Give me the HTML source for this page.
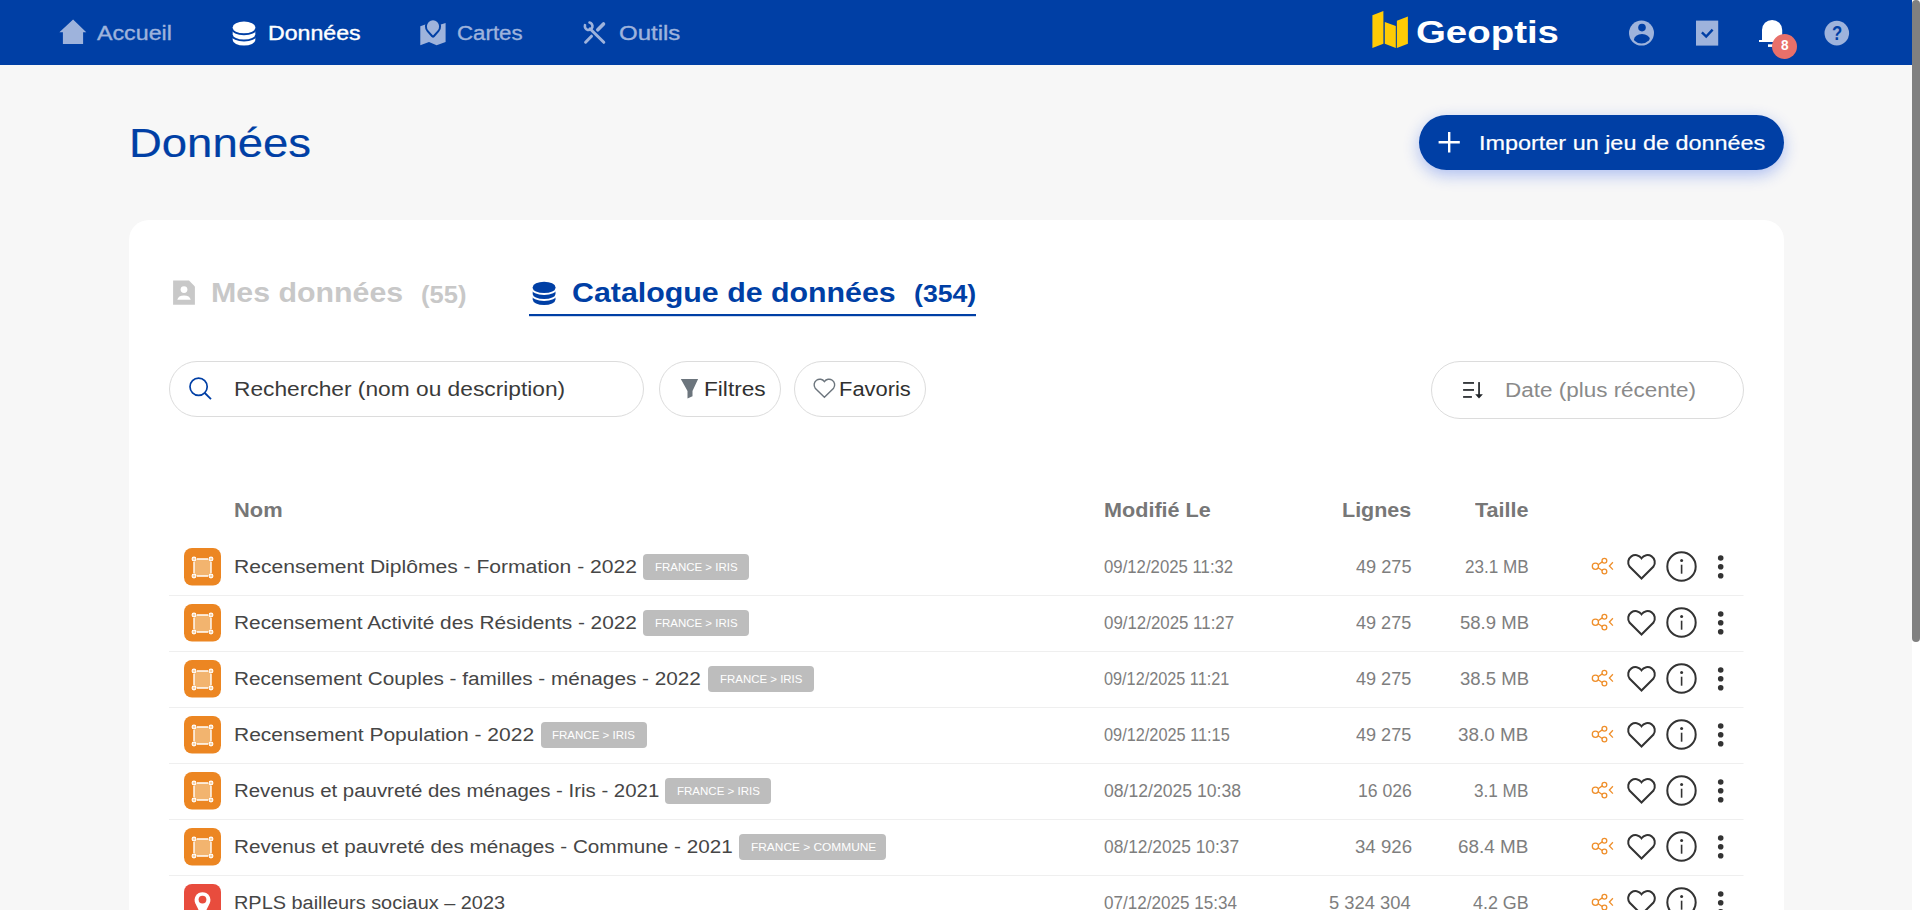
<!DOCTYPE html>
<html><head><meta charset="utf-8"><title>Données - Geoptis</title>
<style>
html,body{margin:0;padding:0;width:1920px;height:910px;overflow:hidden;background:#f7f7f7;font-family:"Liberation Sans", sans-serif}
.t{position:absolute;white-space:nowrap;transform-origin:0 0}
</style></head><body>
<div style="position:absolute;left:0;top:0;width:1912px;height:65px;background:#003fa5"></div>
<div style="position:absolute;left:1912px;top:0;width:8px;height:910px;background:#fff"></div>
<div style="position:absolute;left:1912px;top:0;width:8px;height:642px;background:#808080;border-radius:4px"></div>
<svg style="position:absolute;left:0;top:0" width="1912" height="65" viewBox="0 0 1912 65">
<polygon fill="#9eb3dc" points="59.4,32.3 73.1,19.4 86.3,32.3 83.1,32.3 83.1,44 62.9,44 62.9,32.3"/>
<g>
<path fill="#fff" d="M232.7 27.2 A11.3 5.6 0 0 1 255.3 27.2 L255.3 40 A11.3 5.6 0 0 1 232.7 40 Z"/>
<path fill="none" stroke="#003fa5" stroke-width="1.9" d="M232 28.6 A12 5.6 0 0 0 256 28.6"/>
<path fill="none" stroke="#003fa5" stroke-width="1.9" d="M232 34.9 A12 5.6 0 0 0 256 34.9"/>
</g>
<path fill="#9eb3dc" d="M420.3 26.3 L426 24.2 L440 24.8 L445.6 23.1 L445.6 42 L436.6 45.3 L429 42 L420.3 45.2 Z"/>
<path fill="#003fa5" stroke="#003fa5" stroke-width="4" stroke-linejoin="round" d="M433 35.6 L428.43 30.44 A6.1 6.1 0 1 1 437.57 30.44 Z"/><path fill="#9eb3dc" d="M433 35.6 L428.43 30.44 A6.1 6.1 0 1 1 437.57 30.44 Z"/>
<g stroke="#9eb3dc" stroke-linecap="round" fill="none">
<path stroke-width="3" d="M590 28.8 L603.8 42.3"/>
<path stroke-width="2.6" d="M585 25.2 A3.8 3.8 0 1 0 589.5 22.5"/>
<path stroke-width="3" d="M591.5 36.2 L585.6 42.2"/>
<path stroke-width="3.6" d="M597.8 29.8 L603.5 24"/>
</g>
<polygon fill="#ffcb05" points="1372.4,15.2 1383.4,11.0 1383.4,43.7 1372.4,47.9"/>
<polygon fill="#ffcb05" points="1384.8,22.0 1395.8,25.9 1395.8,47.9 1384.8,43.7"/>
<polygon fill="#ffcb05" points="1396.9,20.7 1407.9,16.5 1407.9,43.7 1396.9,47.9"/>
<circle cx="1641.5" cy="33.1" r="12.5" fill="#9eb3dc"/>
<circle cx="1642" cy="27.6" r="3.8" fill="#003fa5"/>
<clipPath id="uc"><circle cx="1641.5" cy="33.1" r="10.3"/></clipPath>
<ellipse cx="1642" cy="39.6" rx="8" ry="5.6" fill="#003fa5" clip-path="url(#uc)"/>
<rect x="1696" y="20.6" width="22.2" height="25" fill="#9eb3dc"/>
<path fill="none" stroke="#003fa5" stroke-width="2.4" d="M1701.9 32.4 L1706.2 36.6 L1712.6 29.6"/>
<path fill="#fff" d="M1762 40 L1762 30 A10.1 10.1 0 0 1 1782.2 30 L1782.2 40 L1784 40 L1784 42 L1759 42 L1759 40 Z"/>
<rect x="1768" y="44.3" width="5" height="2.6" fill="#fff"/>
<circle cx="1784.5" cy="46.5" r="12.5" fill="#e8706a"/>
<circle cx="1836.8" cy="33.1" r="12.3" fill="#9eb3dc"/>
</svg>
<div class="t" style="left:97.00px;top:22.92px;font-size:20px;line-height:20px;font-weight:400;color:#9eb3dc;transform:scaleX(1.1619);-webkit-text-stroke:0.35px #9eb3dc;">Accueil</div>
<div class="t" style="left:268.49px;top:22.87px;font-size:20px;line-height:20px;font-weight:400;color:#fff;transform:scaleX(1.1571);-webkit-text-stroke:0.35px #fff;">Données</div>
<div class="t" style="left:457.29px;top:23.07px;font-size:20px;line-height:20px;font-weight:400;color:#9eb3dc;transform:scaleX(1.1140);-webkit-text-stroke:0.35px #9eb3dc;">Cartes</div>
<div class="t" style="left:619.40px;top:23.07px;font-size:20px;line-height:20px;font-weight:400;color:#9eb3dc;transform:scaleX(1.2000);-webkit-text-stroke:0.35px #9eb3dc;">Outils</div>
<div class="t" style="left:1415.90px;top:16.21px;font-size:32px;line-height:32px;font-weight:700;color:#fff;transform:scaleX(1.2000);">Geoptis</div>
<div class="t" style="left:1780.80px;top:38.45px;font-size:14px;line-height:14px;font-weight:700;color:#fff;transform:scaleX(0.9750);">8</div>
<div class="t" style="left:1832.07px;top:23.17px;font-size:20px;line-height:20px;font-weight:700;color:#003fa5;transform:scaleX(0.8350);">?</div>
<div class="t" style="left:129.29px;top:123.14px;font-size:40px;line-height:40px;font-weight:400;color:#003fa5;transform:scaleX(1.1365);-webkit-text-stroke:0.2px #003fa5;">Données</div>
<div style="position:absolute;left:1419px;top:115px;width:365px;height:55px;border-radius:28px;background:#003fa5;box-shadow:0 5px 16px rgba(20,70,230,0.32)"></div>
<svg style="position:absolute;left:0;top:0" width="1912" height="200"><path stroke="#fff" stroke-width="2.4" d="M1449.2 132 L1449.2 152.5 M1438.6 142.2 L1459.8 142.2"/></svg>
<div class="t" style="left:1479.26px;top:132.97px;font-size:20px;line-height:20px;font-weight:400;color:#fff;transform:scaleX(1.1702);-webkit-text-stroke:0.2px #fff;">Importer un jeu de données</div>
<div style="position:absolute;left:129px;top:220px;width:1655px;height:760px;background:#fff;border-radius:20px"></div>
<svg style="position:absolute;left:0;top:0" width="1912" height="910">
<path fill="#c8c8c8" d="M173.1 280.5 L189 280.5 L194.9 286.4 L194.9 304.7 L173.1 304.7 Z"/>
<circle cx="184" cy="289.6" r="3.4" fill="#fff"/>
<path fill="#fff" d="M177.3 299.8 A6.8 5.3 0 0 1 190.7 299.8 Z"/>
<g>
<path fill="#003fa5" d="M532.7 287.2 A11.4 5.5 0 0 1 555.5 287.2 L555.5 299.5 A11.4 5.5 0 0 1 532.7 299.5 Z"/>
<path fill="none" stroke="#fff" stroke-width="1.8" d="M532 288.4 A12.1 5.6 0 0 0 556.2 288.4"/>
<path fill="none" stroke="#fff" stroke-width="1.8" d="M532 294.4 A12.1 5.6 0 0 0 556.2 294.4"/>
</g>
<rect x="529" y="314" width="447" height="2.2" fill="#003fa5"/>
</svg>
<div class="t" style="left:210.53px;top:279.40px;font-size:28px;line-height:28px;font-weight:700;color:#c8c8c8;transform:scaleX(1.0833);">Mes données</div>
<div class="t" style="left:420.84px;top:282.78px;font-size:24px;line-height:24px;font-weight:700;color:#c8c8c8;transform:scaleX(1.0634);">(55)</div>
<div class="t" style="left:571.52px;top:278.90px;font-size:28px;line-height:28px;font-weight:700;color:#003fa5;transform:scaleX(1.0838);">Catalogue de données</div>
<div class="t" style="left:914.19px;top:282.28px;font-size:24px;line-height:24px;font-weight:700;color:#003fa5;transform:scaleX(1.1111);">(354)</div>
<div style="position:absolute;left:169px;top:361px;width:473px;height:54px;border:1px solid #dcdcdc;border-radius:28px"></div>
<div style="position:absolute;left:659px;top:361px;width:120px;height:54px;border:1px solid #dcdcdc;border-radius:28px"></div>
<div style="position:absolute;left:794px;top:361px;width:130px;height:54px;border:1px solid #dcdcdc;border-radius:28px"></div>
<div style="position:absolute;left:1431px;top:361px;width:311px;height:56px;border:1px solid #dcdcdc;border-radius:29px"></div>
<svg style="position:absolute;left:0;top:0" width="1912" height="910">
<circle cx="198.6" cy="386.8" r="8.6" fill="none" stroke="#003fa5" stroke-width="1.7"/>
<path d="M204.8 393 L211 399.2" stroke="#003fa5" stroke-width="1.8"/>
<path fill="#6c757d" d="M680.8 379.1 L698.1 379.1 L692.5 391.1 L692.5 396.2 L687.5 398.6 L687.5 391.1 Z"/>
<path fill="none" stroke="#6c757d" stroke-width="1.4" d="M824.4 397.3 L815.2 388.2 A4.9 4.9 0 0 1 824.4 381.6 A4.9 4.9 0 0 1 833.6 388.2 Z"/>
<g fill="#212529">
<rect x="1463.1" y="382.1" width="10.9" height="1.7"/>
<rect x="1463.1" y="389.1" width="10.9" height="1.7"/>
<rect x="1463.1" y="396.1" width="8.8" height="1.7"/>
<rect x="1478.2" y="382.1" width="1.7" height="13"/>
<path d="M1475.2 394.2 L1482.9 394.2 L1479 398.6 Z"/>
</g>
</svg>
<div class="t" style="left:233.98px;top:378.67px;font-size:20px;line-height:20px;font-weight:400;color:#3a3a3a;transform:scaleX(1.1370);">Rechercher (nom ou description)</div>
<div class="t" style="left:704.33px;top:378.87px;font-size:20px;line-height:20px;font-weight:400;color:#303030;transform:scaleX(1.1327);">Filtres</div>
<div class="t" style="left:838.81px;top:378.87px;font-size:20px;line-height:20px;font-weight:400;color:#303030;transform:scaleX(1.0952);">Favoris</div>
<div class="t" style="left:1504.75px;top:379.87px;font-size:20px;line-height:20px;font-weight:400;color:#8a8a8a;transform:scaleX(1.1234);">Date (plus récente)</div>
<div class="t" style="left:234.01px;top:499.87px;font-size:20px;line-height:20px;font-weight:700;color:#777;transform:scaleX(1.0930);">Nom</div>
<div class="t" style="left:1104.32px;top:499.97px;font-size:20px;line-height:20px;font-weight:700;color:#777;transform:scaleX(1.0804);">Modifié Le</div>
<div class="t" style="left:1341.93px;top:499.97px;font-size:20px;line-height:20px;font-weight:700;color:#777;transform:scaleX(1.0746);">Lignes</div>
<div class="t" style="left:1474.80px;top:499.97px;font-size:20px;line-height:20px;font-weight:700;color:#777;transform:scaleX(1.0796);">Taille</div>
<div class="t" style="left:233.93px;top:557.66px;font-size:18px;line-height:18px;font-weight:400;color:#464646;transform:scaleX(1.1708);">Recensement Diplômes - Formation - 2022</div>
<div style="position:absolute;left:643.1px;top:554px;width:105.6px;height:26px;background:#bdbdbd;border-radius:4px"></div>
<div class="t" style="left:654.86px;top:561.59px;font-size:11px;line-height:11px;font-weight:400;color:#fff;transform:scaleX(1.0429);">FRANCE &gt; IRIS</div>
<div class="t" style="left:1103.97px;top:557.66px;font-size:18px;line-height:18px;font-weight:400;color:#7e7e7e;transform:scaleX(0.9307);">09/12/2025 11:32</div>
<div class="t" style="left:1356.00px;top:557.66px;font-size:18px;line-height:18px;font-weight:400;color:#7e7e7e;transform:scaleX(1.0093);">49 275</div>
<div class="t" style="left:1464.75px;top:557.66px;font-size:18px;line-height:18px;font-weight:400;color:#7e7e7e;transform:scaleX(0.9508);">23.1 MB</div>
<div class="t" style="left:233.94px;top:613.66px;font-size:18px;line-height:18px;font-weight:400;color:#464646;transform:scaleX(1.1573);">Recensement Activité des Résidents - 2022</div>
<div style="position:absolute;left:643.1px;top:610px;width:105.6px;height:26px;background:#bdbdbd;border-radius:4px"></div>
<div class="t" style="left:654.86px;top:617.59px;font-size:11px;line-height:11px;font-weight:400;color:#fff;transform:scaleX(1.0429);">FRANCE &gt; IRIS</div>
<div class="t" style="left:1103.96px;top:613.66px;font-size:18px;line-height:18px;font-weight:400;color:#7e7e7e;transform:scaleX(0.9372);">09/12/2025 11:27</div>
<div class="t" style="left:1356.30px;top:613.66px;font-size:18px;line-height:18px;font-weight:400;color:#7e7e7e;transform:scaleX(1.0037);">49 275</div>
<div class="t" style="left:1459.57px;top:613.66px;font-size:18px;line-height:18px;font-weight:400;color:#7e7e7e;transform:scaleX(1.0292);">58.9 MB</div>
<div class="t" style="left:233.95px;top:669.66px;font-size:18px;line-height:18px;font-weight:400;color:#464646;transform:scaleX(1.1522);">Recensement Couples - familles - ménages - 2022</div>
<div style="position:absolute;left:708.4px;top:666px;width:105.5px;height:26px;background:#bdbdbd;border-radius:4px"></div>
<div class="t" style="left:720.16px;top:673.59px;font-size:11px;line-height:11px;font-weight:400;color:#fff;transform:scaleX(1.0410);">FRANCE &gt; IRIS</div>
<div class="t" style="left:1104.00px;top:669.66px;font-size:18px;line-height:18px;font-weight:400;color:#7e7e7e;transform:scaleX(0.9029);">09/12/2025 11:21</div>
<div class="t" style="left:1356.30px;top:669.66px;font-size:18px;line-height:18px;font-weight:400;color:#7e7e7e;transform:scaleX(1.0037);">49 275</div>
<div class="t" style="left:1459.57px;top:669.66px;font-size:18px;line-height:18px;font-weight:400;color:#7e7e7e;transform:scaleX(1.0292);">38.5 MB</div>
<div class="t" style="left:233.93px;top:725.66px;font-size:18px;line-height:18px;font-weight:400;color:#464646;transform:scaleX(1.1668);">Recensement Population - 2022</div>
<div style="position:absolute;left:540.7px;top:722px;width:106.0px;height:26px;background:#bdbdbd;border-radius:4px"></div>
<div class="t" style="left:552.45px;top:729.59px;font-size:11px;line-height:11px;font-weight:400;color:#fff;transform:scaleX(1.0474);">FRANCE &gt; IRIS</div>
<div class="t" style="left:1103.99px;top:725.66px;font-size:18px;line-height:18px;font-weight:400;color:#7e7e7e;transform:scaleX(0.9058);">09/12/2025 11:15</div>
<div class="t" style="left:1356.30px;top:725.66px;font-size:18px;line-height:18px;font-weight:400;color:#7e7e7e;transform:scaleX(1.0037);">49 275</div>
<div class="t" style="left:1458.35px;top:725.66px;font-size:18px;line-height:18px;font-weight:400;color:#7e7e7e;transform:scaleX(1.0477);">38.0 MB</div>
<div class="t" style="left:233.97px;top:781.66px;font-size:18px;line-height:18px;font-weight:400;color:#464646;transform:scaleX(1.1334);">Revenus et pauvreté des ménages - Iris - 2021</div>
<div style="position:absolute;left:664.8px;top:778px;width:106.0px;height:26px;background:#bdbdbd;border-radius:4px"></div>
<div class="t" style="left:676.55px;top:785.59px;font-size:11px;line-height:11px;font-weight:400;color:#fff;transform:scaleX(1.0474);">FRANCE &gt; IRIS</div>
<div class="t" style="left:1103.92px;top:781.66px;font-size:18px;line-height:18px;font-weight:400;color:#7e7e7e;transform:scaleX(0.9775);">08/12/2025 10:38</div>
<div class="t" style="left:1357.62px;top:781.66px;font-size:18px;line-height:18px;font-weight:400;color:#7e7e7e;transform:scaleX(0.9792);">16 026</div>
<div class="t" style="left:1474.15px;top:781.66px;font-size:18px;line-height:18px;font-weight:400;color:#7e7e7e;transform:scaleX(0.9527);">3.1 MB</div>
<div class="t" style="left:233.95px;top:837.66px;font-size:18px;line-height:18px;font-weight:400;color:#464646;transform:scaleX(1.1483);">Revenus et pauvreté des ménages - Commune - 2021</div>
<div style="position:absolute;left:738.8px;top:834px;width:147.6px;height:26px;background:#bdbdbd;border-radius:4px"></div>
<div class="t" style="left:750.52px;top:841.59px;font-size:11px;line-height:11px;font-weight:400;color:#fff;transform:scaleX(1.0816);">FRANCE &gt; COMMUNE</div>
<div class="t" style="left:1103.94px;top:837.66px;font-size:18px;line-height:18px;font-weight:400;color:#7e7e7e;transform:scaleX(0.9645);">08/12/2025 10:37</div>
<div class="t" style="left:1354.56px;top:837.66px;font-size:18px;line-height:18px;font-weight:400;color:#7e7e7e;transform:scaleX(1.0358);">34 926</div>
<div class="t" style="left:1458.35px;top:837.66px;font-size:18px;line-height:18px;font-weight:400;color:#7e7e7e;transform:scaleX(1.0477);">68.4 MB</div>
<div class="t" style="left:233.99px;top:893.66px;font-size:18px;line-height:18px;font-weight:400;color:#464646;transform:scaleX(1.1057);">RPLS bailleurs sociaux – 2023</div>
<div class="t" style="left:1103.95px;top:893.66px;font-size:18px;line-height:18px;font-weight:400;color:#7e7e7e;transform:scaleX(0.9489);">07/12/2025 15:34</div>
<div class="t" style="left:1328.98px;top:893.66px;font-size:18px;line-height:18px;font-weight:400;color:#7e7e7e;transform:scaleX(1.0190);">5 324 304</div>
<div class="t" style="left:1472.80px;top:893.66px;font-size:18px;line-height:18px;font-weight:400;color:#7e7e7e;transform:scaleX(0.9945);">4.2 GB</div>
<svg style="position:absolute;left:0;top:0" width="1912" height="910"><rect x="169" y="595" width="1574.5" height="1" fill="#efefef"/><rect x="184" y="548" width="37" height="37.5" rx="8" fill="#ec8622"/><rect x="194" y="559" width="17" height="17" fill="#f2b46f"/><path d="M197 559 L208 559 M211 562 L211 573 M208 576 L197 576 M194 573 L194 562" fill="none" stroke="#fff" stroke-width="1.4"/><circle cx="194" cy="559" r="1.9" fill="#f6d2aa" stroke="#fff" stroke-width="1.1"/><circle cx="211" cy="559" r="1.9" fill="#f6d2aa" stroke="#fff" stroke-width="1.1"/><circle cx="194" cy="576" r="1.9" fill="#f6d2aa" stroke="#fff" stroke-width="1.1"/><circle cx="211" cy="576" r="1.9" fill="#f6d2aa" stroke="#fff" stroke-width="1.1"/><g fill="none" stroke="#ef8f2b" stroke-width="1.3"><circle cx="1595.4" cy="566.25" r="3.1"/><circle cx="1604.4" cy="560.8" r="2.4"/><circle cx="1604.4" cy="571.5" r="2.4"/><path d="M1598.2 564.8 L1602.2 561.9 M1598.2 567.7 L1602.2 570.5"/><path d="M1612.9 562.3 L1609.4 566.0 L1612.9 569.6"/></g><path fill="none" stroke="#333" stroke-width="2" d="M1641.5 578.5 L1629.5 566.5 A6.6 6.6 0 0 1 1641.5 558.2 A6.6 6.6 0 0 1 1653.5 566.5 Z" stroke-linejoin="miter"/><circle cx="1681.5" cy="566.5" r="14.2" fill="none" stroke="#333" stroke-width="2"/><circle cx="1681.6" cy="560.4" r="1.5" fill="#333"/><rect x="1680.8" y="564.7" width="1.6" height="9" fill="#333"/><g fill="#333"><circle cx="1720.7" cy="558.0" r="2.8"/><circle cx="1720.7" cy="566.8" r="2.8"/><circle cx="1720.7" cy="575.7" r="2.8"/></g><rect x="169" y="651" width="1574.5" height="1" fill="#efefef"/><rect x="184" y="604" width="37" height="37.5" rx="8" fill="#ec8622"/><rect x="194" y="615" width="17" height="17" fill="#f2b46f"/><path d="M197 615 L208 615 M211 618 L211 629 M208 632 L197 632 M194 629 L194 618" fill="none" stroke="#fff" stroke-width="1.4"/><circle cx="194" cy="615" r="1.9" fill="#f6d2aa" stroke="#fff" stroke-width="1.1"/><circle cx="211" cy="615" r="1.9" fill="#f6d2aa" stroke="#fff" stroke-width="1.1"/><circle cx="194" cy="632" r="1.9" fill="#f6d2aa" stroke="#fff" stroke-width="1.1"/><circle cx="211" cy="632" r="1.9" fill="#f6d2aa" stroke="#fff" stroke-width="1.1"/><g fill="none" stroke="#ef8f2b" stroke-width="1.3"><circle cx="1595.4" cy="622.25" r="3.1"/><circle cx="1604.4" cy="616.8" r="2.4"/><circle cx="1604.4" cy="627.5" r="2.4"/><path d="M1598.2 620.8 L1602.2 617.9 M1598.2 623.7 L1602.2 626.5"/><path d="M1612.9 618.3 L1609.4 622.0 L1612.9 625.6"/></g><path fill="none" stroke="#333" stroke-width="2" d="M1641.5 634.5 L1629.5 622.5 A6.6 6.6 0 0 1 1641.5 614.2 A6.6 6.6 0 0 1 1653.5 622.5 Z" stroke-linejoin="miter"/><circle cx="1681.5" cy="622.5" r="14.2" fill="none" stroke="#333" stroke-width="2"/><circle cx="1681.6" cy="616.4" r="1.5" fill="#333"/><rect x="1680.8" y="620.7" width="1.6" height="9" fill="#333"/><g fill="#333"><circle cx="1720.7" cy="614.0" r="2.8"/><circle cx="1720.7" cy="622.8" r="2.8"/><circle cx="1720.7" cy="631.7" r="2.8"/></g><rect x="169" y="707" width="1574.5" height="1" fill="#efefef"/><rect x="184" y="660" width="37" height="37.5" rx="8" fill="#ec8622"/><rect x="194" y="671" width="17" height="17" fill="#f2b46f"/><path d="M197 671 L208 671 M211 674 L211 685 M208 688 L197 688 M194 685 L194 674" fill="none" stroke="#fff" stroke-width="1.4"/><circle cx="194" cy="671" r="1.9" fill="#f6d2aa" stroke="#fff" stroke-width="1.1"/><circle cx="211" cy="671" r="1.9" fill="#f6d2aa" stroke="#fff" stroke-width="1.1"/><circle cx="194" cy="688" r="1.9" fill="#f6d2aa" stroke="#fff" stroke-width="1.1"/><circle cx="211" cy="688" r="1.9" fill="#f6d2aa" stroke="#fff" stroke-width="1.1"/><g fill="none" stroke="#ef8f2b" stroke-width="1.3"><circle cx="1595.4" cy="678.25" r="3.1"/><circle cx="1604.4" cy="672.8" r="2.4"/><circle cx="1604.4" cy="683.5" r="2.4"/><path d="M1598.2 676.8 L1602.2 673.9 M1598.2 679.7 L1602.2 682.5"/><path d="M1612.9 674.3 L1609.4 678.0 L1612.9 681.6"/></g><path fill="none" stroke="#333" stroke-width="2" d="M1641.5 690.5 L1629.5 678.5 A6.6 6.6 0 0 1 1641.5 670.2 A6.6 6.6 0 0 1 1653.5 678.5 Z" stroke-linejoin="miter"/><circle cx="1681.5" cy="678.5" r="14.2" fill="none" stroke="#333" stroke-width="2"/><circle cx="1681.6" cy="672.4" r="1.5" fill="#333"/><rect x="1680.8" y="676.7" width="1.6" height="9" fill="#333"/><g fill="#333"><circle cx="1720.7" cy="670.0" r="2.8"/><circle cx="1720.7" cy="678.8" r="2.8"/><circle cx="1720.7" cy="687.7" r="2.8"/></g><rect x="169" y="763" width="1574.5" height="1" fill="#efefef"/><rect x="184" y="716" width="37" height="37.5" rx="8" fill="#ec8622"/><rect x="194" y="727" width="17" height="17" fill="#f2b46f"/><path d="M197 727 L208 727 M211 730 L211 741 M208 744 L197 744 M194 741 L194 730" fill="none" stroke="#fff" stroke-width="1.4"/><circle cx="194" cy="727" r="1.9" fill="#f6d2aa" stroke="#fff" stroke-width="1.1"/><circle cx="211" cy="727" r="1.9" fill="#f6d2aa" stroke="#fff" stroke-width="1.1"/><circle cx="194" cy="744" r="1.9" fill="#f6d2aa" stroke="#fff" stroke-width="1.1"/><circle cx="211" cy="744" r="1.9" fill="#f6d2aa" stroke="#fff" stroke-width="1.1"/><g fill="none" stroke="#ef8f2b" stroke-width="1.3"><circle cx="1595.4" cy="734.25" r="3.1"/><circle cx="1604.4" cy="728.8" r="2.4"/><circle cx="1604.4" cy="739.5" r="2.4"/><path d="M1598.2 732.8 L1602.2 729.9 M1598.2 735.7 L1602.2 738.5"/><path d="M1612.9 730.3 L1609.4 734.0 L1612.9 737.6"/></g><path fill="none" stroke="#333" stroke-width="2" d="M1641.5 746.5 L1629.5 734.5 A6.6 6.6 0 0 1 1641.5 726.2 A6.6 6.6 0 0 1 1653.5 734.5 Z" stroke-linejoin="miter"/><circle cx="1681.5" cy="734.5" r="14.2" fill="none" stroke="#333" stroke-width="2"/><circle cx="1681.6" cy="728.4" r="1.5" fill="#333"/><rect x="1680.8" y="732.7" width="1.6" height="9" fill="#333"/><g fill="#333"><circle cx="1720.7" cy="726.0" r="2.8"/><circle cx="1720.7" cy="734.8" r="2.8"/><circle cx="1720.7" cy="743.7" r="2.8"/></g><rect x="169" y="819" width="1574.5" height="1" fill="#efefef"/><rect x="184" y="772" width="37" height="37.5" rx="8" fill="#ec8622"/><rect x="194" y="783" width="17" height="17" fill="#f2b46f"/><path d="M197 783 L208 783 M211 786 L211 797 M208 800 L197 800 M194 797 L194 786" fill="none" stroke="#fff" stroke-width="1.4"/><circle cx="194" cy="783" r="1.9" fill="#f6d2aa" stroke="#fff" stroke-width="1.1"/><circle cx="211" cy="783" r="1.9" fill="#f6d2aa" stroke="#fff" stroke-width="1.1"/><circle cx="194" cy="800" r="1.9" fill="#f6d2aa" stroke="#fff" stroke-width="1.1"/><circle cx="211" cy="800" r="1.9" fill="#f6d2aa" stroke="#fff" stroke-width="1.1"/><g fill="none" stroke="#ef8f2b" stroke-width="1.3"><circle cx="1595.4" cy="790.25" r="3.1"/><circle cx="1604.4" cy="784.8" r="2.4"/><circle cx="1604.4" cy="795.5" r="2.4"/><path d="M1598.2 788.8 L1602.2 785.9 M1598.2 791.7 L1602.2 794.5"/><path d="M1612.9 786.3 L1609.4 790.0 L1612.9 793.6"/></g><path fill="none" stroke="#333" stroke-width="2" d="M1641.5 802.5 L1629.5 790.5 A6.6 6.6 0 0 1 1641.5 782.2 A6.6 6.6 0 0 1 1653.5 790.5 Z" stroke-linejoin="miter"/><circle cx="1681.5" cy="790.5" r="14.2" fill="none" stroke="#333" stroke-width="2"/><circle cx="1681.6" cy="784.4" r="1.5" fill="#333"/><rect x="1680.8" y="788.7" width="1.6" height="9" fill="#333"/><g fill="#333"><circle cx="1720.7" cy="782.0" r="2.8"/><circle cx="1720.7" cy="790.8" r="2.8"/><circle cx="1720.7" cy="799.7" r="2.8"/></g><rect x="169" y="875" width="1574.5" height="1" fill="#efefef"/><rect x="184" y="828" width="37" height="37.5" rx="8" fill="#ec8622"/><rect x="194" y="839" width="17" height="17" fill="#f2b46f"/><path d="M197 839 L208 839 M211 842 L211 853 M208 856 L197 856 M194 853 L194 842" fill="none" stroke="#fff" stroke-width="1.4"/><circle cx="194" cy="839" r="1.9" fill="#f6d2aa" stroke="#fff" stroke-width="1.1"/><circle cx="211" cy="839" r="1.9" fill="#f6d2aa" stroke="#fff" stroke-width="1.1"/><circle cx="194" cy="856" r="1.9" fill="#f6d2aa" stroke="#fff" stroke-width="1.1"/><circle cx="211" cy="856" r="1.9" fill="#f6d2aa" stroke="#fff" stroke-width="1.1"/><g fill="none" stroke="#ef8f2b" stroke-width="1.3"><circle cx="1595.4" cy="846.25" r="3.1"/><circle cx="1604.4" cy="840.8" r="2.4"/><circle cx="1604.4" cy="851.5" r="2.4"/><path d="M1598.2 844.8 L1602.2 841.9 M1598.2 847.7 L1602.2 850.5"/><path d="M1612.9 842.3 L1609.4 846.0 L1612.9 849.6"/></g><path fill="none" stroke="#333" stroke-width="2" d="M1641.5 858.5 L1629.5 846.5 A6.6 6.6 0 0 1 1641.5 838.2 A6.6 6.6 0 0 1 1653.5 846.5 Z" stroke-linejoin="miter"/><circle cx="1681.5" cy="846.5" r="14.2" fill="none" stroke="#333" stroke-width="2"/><circle cx="1681.6" cy="840.4" r="1.5" fill="#333"/><rect x="1680.8" y="844.7" width="1.6" height="9" fill="#333"/><g fill="#333"><circle cx="1720.7" cy="838.0" r="2.8"/><circle cx="1720.7" cy="846.8" r="2.8"/><circle cx="1720.7" cy="855.7" r="2.8"/></g><rect x="184" y="884" width="37" height="37.5" rx="8" fill="#e84c3d"/><path fill="#fff" d="M202.5 918 L195.3 903.3 A7.9 7.9 0 1 1 209.7 903.3 Z"/><circle cx="202.5" cy="899.6" r="3.9" fill="#e84c3d"/><g fill="none" stroke="#ef8f2b" stroke-width="1.3"><circle cx="1595.4" cy="902.25" r="3.1"/><circle cx="1604.4" cy="896.8" r="2.4"/><circle cx="1604.4" cy="907.5" r="2.4"/><path d="M1598.2 900.8 L1602.2 897.9 M1598.2 903.7 L1602.2 906.5"/><path d="M1612.9 898.3 L1609.4 902.0 L1612.9 905.6"/></g><path fill="none" stroke="#333" stroke-width="2" d="M1641.5 914.5 L1629.5 902.5 A6.6 6.6 0 0 1 1641.5 894.2 A6.6 6.6 0 0 1 1653.5 902.5 Z" stroke-linejoin="miter"/><circle cx="1681.5" cy="902.5" r="14.2" fill="none" stroke="#333" stroke-width="2"/><circle cx="1681.6" cy="896.4" r="1.5" fill="#333"/><rect x="1680.8" y="900.7" width="1.6" height="9" fill="#333"/><g fill="#333"><circle cx="1720.7" cy="894.0" r="2.8"/><circle cx="1720.7" cy="902.8" r="2.8"/><circle cx="1720.7" cy="911.7" r="2.8"/></g></svg>
</body></html>
